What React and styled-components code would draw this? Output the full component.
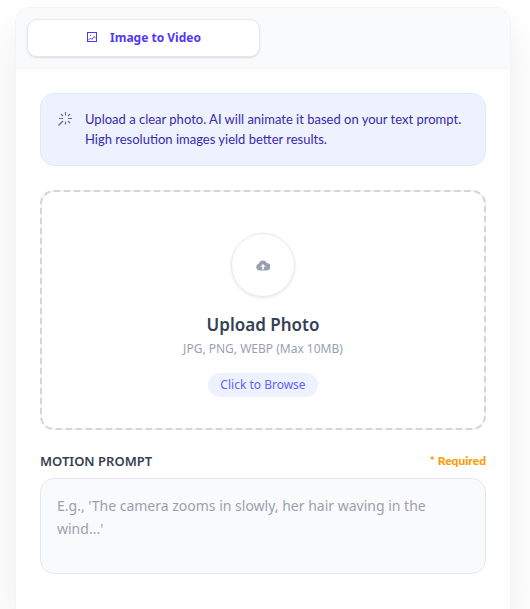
import React, { useState } from 'react';
import styled, { createGlobalStyle } from 'styled-components';

const GlobalStyle = createGlobalStyle`
  * {
    box-sizing: border-box;
  }
  body {
    margin: 0;
    background-color: #ffffff;
    font-family: "Noto Sans", "Open Sans", sans-serif;
  }
`;

const Page = styled.main`
  display: flex;
  flex-direction: column;
  min-height: 100vh;
  padding: 7px 19px 0 15px;
`;

const Card = styled.div`
  flex: 1;
  background-color: #ffffff;
  border: 1px solid #f3f4f6;
  border-bottom: none;
  border-radius: 16px 16px 0 0;
  box-shadow: 0 20px 40px rgba(0, 0, 0, 0.08);
  overflow: hidden;
`;

const TabBar = styled.div`
  display: grid;
  grid-template-columns: 1fr 1fr;
  gap: 6px;
  padding: 11px;
  background-color: #f9fafb;
  border-bottom: 1px solid #f3f4f6;
`;

const Tab = styled.button`
  display: flex;
  align-items: center;
  justify-content: center;
  gap: 12px;
  height: 38px;
  padding: 0 12px 2px;
  border: 1px solid #e5e7eb;
  border-radius: 10px;
  background-color: #ffffff;
  box-shadow: 0 1px 2px rgba(0, 0, 0, 0.12);
  color: #4f39f6;
  font-family: inherit;
  font-size: 12px;
  font-weight: 700;
  cursor: pointer;
`;

const Body = styled.div`
  display: flex;
  flex-direction: column;
  gap: 24px;
  padding: 24px;
`;

const Notice = styled.div`
  display: flex;
  gap: 12px;
  padding: 15px 16px 16px;
  background-color: #eef2ff;
  border: 1px solid #e0e7ff;
  border-radius: 14px;
  color: #372aac;

  svg {
    flex-shrink: 0;
    margin-top: 2px;
  }
  p {
    margin: 0;
    font-family: Lato, "Noto Sans", sans-serif;
    font-size: 13px;
    line-height: 20px;
  }
`;

const DropZone = styled.div`
  display: flex;
  flex-direction: column;
  align-items: center;
  height: 240px;
  padding-top: 41px;
  border: 2px dashed #d1d5dc;
  border-radius: 14px;
  background: linear-gradient(#ffffff, #ffffff) padding-box, #f3f4f6 border-box;

  h3 {
    margin: 16px 0 0;
    color: #364153;
    font-size: 17px;
    font-weight: 600;
    line-height: 24px;
  }
  p {
    margin: 2px 0 0;
    color: #99a1af;
    font-size: 12px;
    line-height: 20px;
  }
`;

const IconCircle = styled.div`
  display: flex;
  align-items: center;
  justify-content: center;
  width: 64px;
  height: 64px;
  border: 1px solid #e5e7eb;
  border-radius: 50%;
  box-shadow: 0 1px 3px rgba(0, 0, 0, 0.1);
`;

const BrowseButton = styled.button`
  height: 24px;
  margin-top: 14px;
  padding: 0 12px 2px;
  border: none;
  border-radius: 12px;
  background-color: #eef2ff;
  color: #615fff;
  font-family: inherit;
  font-size: 12px;
  cursor: pointer;
`;

const FieldHeader = styled.div`
  display: flex;
  justify-content: space-between;
  height: 16px;
  margin-bottom: 8px;
`;

const FieldLabel = styled.label`
  color: #364153;
  font-size: 13px;
  font-weight: 600;
  line-height: 14px;
`;

const Required = styled.span`
  color: #fe9a00;
  font-family: Lato, "Noto Sans", sans-serif;
  font-size: 12px;
  font-weight: 900;
  line-height: 14px;
`;

const PromptInput = styled.textarea`
  display: block;
  width: 100%;
  height: 96px;
  padding: 15px 16px;
  border: 1px solid #e5e7eb;
  border-radius: 14px;
  background-color: #f9fafb;
  color: #364153;
  font-family: inherit;
  font-size: 14px;
  line-height: 23px;
  resize: none;

  &::placeholder {
    color: #99a1af;
    opacity: 1;
  }
`;

function ImageIcon() {
  return (
    <svg width="12" height="12" viewBox="0 0 12 12" fill="none" stroke="currentColor">
      <rect x="1.5" y="1.5" width="9" height="9" />
      <path d="M2 9.5 L4.5 7 L6 8.5 L8 5.5 L10 7.5" strokeWidth="0.9" />
      <rect x="4" y="4" width="1" height="1" fill="currentColor" stroke="none" />
    </svg>
  );
}

function WandIcon() {
  return (
    <svg width="16" height="16" viewBox="0 0 16 16" fill="none" stroke="#6a7282" strokeWidth="1.2">
      <path d="M1.5 14.5 L6 10" strokeWidth="1.5" />
      <path d="M8.5 1 V4.5 M8.5 10.5 V13.5 M2 7.5 H6 M11 7.5 H15" />
      <path d="M4 3 L6 5 M13 3 L11 5 M13 12 L11 10" />
    </svg>
  );
}

function CloudIcon() {
  return (
    <svg width="14" height="14" viewBox="0 0 14 14">
      <path
        d="M3.5 12.5 A3.5 3.5 0 0 1 2.9 5.6 A4.2 4.2 0 0 1 10.8 4.9 A3.8 3.8 0 0 1 10.5 12.5 Z"
        fill="#99a1af"
      />
      <path d="M7 6 L9.7 8.7 H7.8 V11.5 H6.2 V8.7 H4.3 Z" fill="#ffffff" />
    </svg>
  );
}

function App() {
  const [prompt, setPrompt] = useState('');

  return (
    <>
      <GlobalStyle />
      <Page>
        <Card>
          <TabBar>
            <Tab type="button">
              <ImageIcon />
              Image to Video
            </Tab>
          </TabBar>
          <Body>
            <Notice>
              <WandIcon />
              <p>
                Upload a clear photo. AI will animate it based on your text prompt. High resolution
                images yield better results.
              </p>
            </Notice>
            <DropZone>
              <IconCircle>
                <CloudIcon />
              </IconCircle>
              <h3>Upload Photo</h3>
              <p>JPG, PNG, WEBP (Max 10MB)</p>
              <BrowseButton type="button">Click to Browse</BrowseButton>
            </DropZone>
            <div>
              <FieldHeader>
                <FieldLabel htmlFor="prompt">MOTION PROMPT</FieldLabel>
                <Required>* Required</Required>
              </FieldHeader>
              <PromptInput
                id="prompt"
                placeholder="E.g., 'The camera zooms in slowly, her hair waving in the wind...'"
                value={prompt}
                onChange={(e) => setPrompt(e.target.value)}
              />
            </div>
          </Body>
        </Card>
      </Page>
    </>
  );
}

export default App;
